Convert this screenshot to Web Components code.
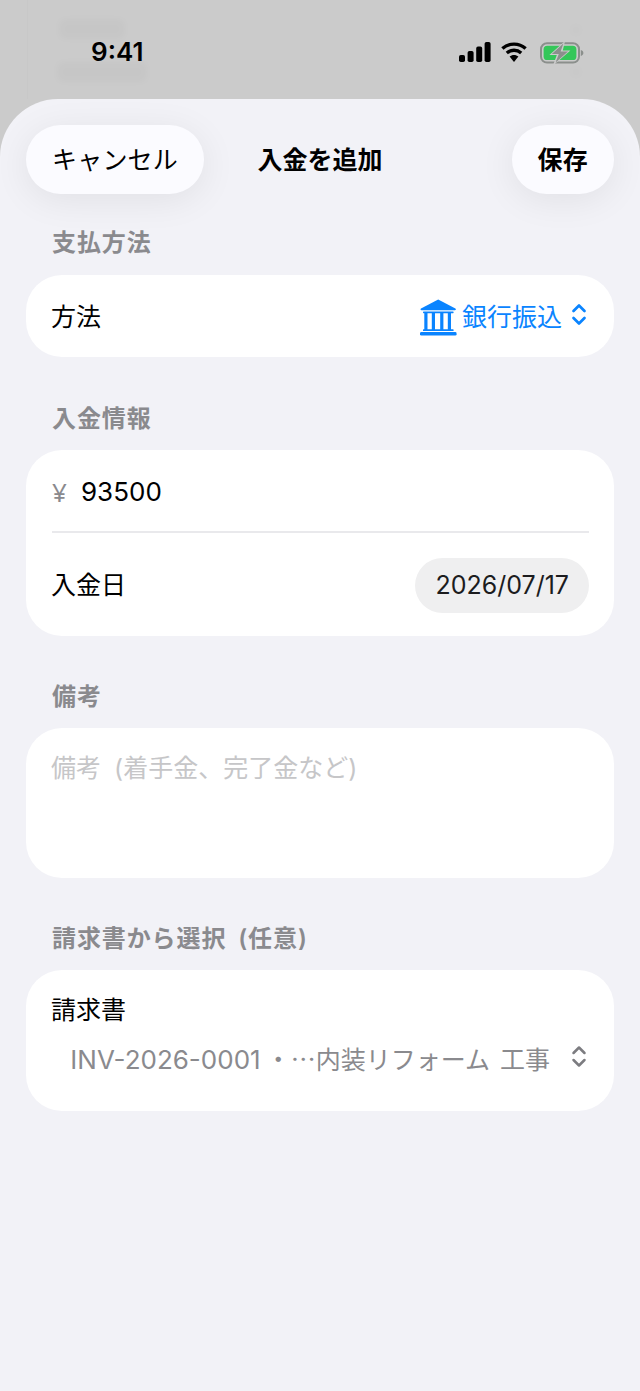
<!DOCTYPE html>
<html lang="ja"><head><meta charset="utf-8"><title>入金を追加</title>
<style>
html,body{margin:0;padding:0;width:640px;height:1391px;overflow:hidden;background:#cbcbcb}
body{font-family:Inter,"Noto Sans CJK JP",sans-serif;}
</style></head><body>
<x-app>
  <x-status-bar slot="status" time="9:41"></x-status-bar>
  <x-sheet slot="sheet">
    <x-nav-bar slot="nav" heading="入金を追加">
      <x-glass-button slot="leading">キャンセル</x-glass-button>
      <x-glass-button slot="trailing" strong>保存</x-glass-button>
    </x-nav-bar>
    <x-section label="支払方法" gap="34" lgap="17">
      <x-row h="82"><span>方法</span><x-method slot="end">銀行振込</x-method></x-row>
    </x-section>
    <x-section label="入金情報" gap="47">
      <x-row h="82" divider><x-amount currency="¥">93500</x-amount></x-row>
      <x-row h="104"><span>入金日</span><x-pill slot="end">2026/07/17</x-pill></x-row>
    </x-section>
    <x-section label="備考" gap="46">
      <x-notes placeholder="備考 (着手金、完了金など)"></x-notes>
    </x-section>
    <x-section label="請求書から選択 (任意)" gap="46">
      <x-picker label="請求書"><span style="font-size:26px">INV-2026-0001</span> <span style="margin-left:-2px">・</span><span style="font-family:'Noto Sans CJK JP',sans-serif">…</span>内装リフォーム <span style="margin-left:3px">工事</span></x-picker>
    </x-section>
  </x-sheet>
</x-app>
<script>
const FONT='Inter,"Noto Sans CJK JP",sans-serif';
function def(name,html){
  customElements.define(name,class extends HTMLElement{
    constructor(){super();this.attachShadow({mode:'open'});}
    connectedCallback(){
      const a=n=>this.getAttribute(n);
      this.shadowRoot.innerHTML=typeof html==='function'?html(a,this):html;
    }
  });
}
const chev=(c,w=2.7)=>`<svg width="16" height="23" viewBox="0 0 16 23" fill="none" stroke="${c}" stroke-width="${w}" stroke-linecap="round" stroke-linejoin="round"><path d="M2.5 8 8 2.5 13.5 8M2.5 15 8 20.5 13.5 15"/></svg>`;

def('x-app',`<style>:host{display:flex;flex-direction:column;width:640px;height:1391px;overflow:hidden;background:#cbcbcb;font-family:${FONT};color:#000}
::slotted(x-sheet){flex:1}</style><slot name="status"></slot><slot name="sheet"></slot>`);

def('x-status-bar',a=>`<style>
:host{display:flex;position:relative;height:99px;box-sizing:border-box;padding:0 56px 0 91px;align-items:flex-start;justify-content:space-between}
.time{font:600 26px/30px Inter,sans-serif;margin-top:37px;position:relative}
.icons{display:flex;align-items:flex-start;margin-top:42px;position:relative}
.ghost{position:absolute;background:#000;opacity:.022;filter:blur(4px);border-radius:4px}
.g1{left:60px;top:20px;width:64px;height:18px}.g2{left:58px;top:63px;width:88px;height:18px}
.g3{left:572px;top:26px;width:8px;height:8px}.g4{left:572px;top:68px;width:8px;height:8px}
.edge{position:absolute;left:27px;top:0;bottom:0;width:1px;background:#000;opacity:.012}
</style>
<i class="ghost g1"></i><i class="ghost g2"></i><i class="ghost g3"></i><i class="ghost g4"></i><i class="edge"></i>
<span class="time">${a('time')}</span>
<span class="icons">
<svg width="32" height="20" viewBox="0 0 32 20" fill="#000"><rect x="0" y="13" width="6" height="7" rx="1.8"/><rect x="8.6" y="9" width="6" height="11" rx="1.8"/><rect x="17.2" y="4.6" width="6" height="15.4" rx="1.8"/><rect x="25.6" y="0" width="6" height="20" rx="1.8"/></svg>
<svg width="26" height="20" viewBox="0 0 26 20" style="margin-left:10px" fill="none" stroke="#000" stroke-width="3.4"><path d="M1.4 6.6C8 .6 18 .6 24.6 6.6"/><path d="M5.8 11C10 7.4 16 7.4 20.2 11"/><path fill="#000" stroke="none" d="M13 20 8.6 14.6C11 12.4 15 12.4 17.4 14.6Z"/></svg>
<svg width="44" height="22" viewBox="0 0 44 22" style="margin-left:13px" fill="none">
<rect x="1" y="1.2" width="38" height="19.4" rx="6" stroke="#8b8f8c" stroke-width="2"/>
<rect x="3.6" y="3.8" width="32.8" height="14.2" rx="3.6" fill="#34c759"/>
<path d="M40.8 8v6c1.6-.4 2.6-1.6 2.6-3s-1-2.6-2.6-3Z" fill="#8b8f8c"/>
<path d="M25 -1 9.4 13h7.4L13 23.5 30.4 8.4h-7.6Z" fill="#cbcbcb"/>
<path d="M23.4 1.4 11.8 12h7L15.6 20.6 28 9.6h-7.4Z" fill="#8b8f8c"/>
</svg>
</span>`);

def('x-sheet',`<style>:host{display:block;position:relative;background:#f2f2f7;border-radius:58px 58px 0 0;overflow:hidden}
.body{position:relative}
</style><div class="body"><slot name="nav"></slot><slot></slot></div>`);

def('x-nav-bar',a=>`<style>:host{display:grid;grid-template-columns:1fr auto 1fr;align-items:center;padding:26px 26px 0;height:69px}
h1{margin:0;font:600 25px/30px ${FONT};white-space:nowrap}
.r{display:flex;justify-content:flex-end}.l{display:flex}
</style><div class="l"><slot name="leading"></slot></div><h1>${a('heading')}</h1><div class="r"><slot name="trailing"></slot></div>`);

def('x-glass-button',(a,e)=>`<style>:host{display:inline-flex;align-items:center;height:69px;padding:0 26px;border-radius:35px;background:#fbfbff;letter-spacing:.2px;
box-shadow:0 6px 36px rgba(0,0,0,.075);font:${e.hasAttribute('strong')?600:400} 25px/30px ${FONT};white-space:nowrap}</style><slot></slot>`);

def('x-section',a=>`<style>:host{display:block;margin-top:${a('gap')}px}
.t{font:600 24px/30px ${FONT};color:#8a8a8e;margin:0 0 ${a('lgap')||16}px 52px;letter-spacing:.9px;word-spacing:5px;white-space:nowrap}
.c{margin:0 26px;background:#fff;border-radius:36px;overflow:hidden;font:400 25px/30px ${FONT}}
</style><div class="t">${a('label')}</div><div class="c"><slot></slot></div>`);

def('x-row',(a,e)=>`<style>:host{display:flex;align-items:center;justify-content:space-between;height:${a('h')}px;padding:2px 25px 0;box-sizing:border-box;position:relative}
.d{position:absolute;left:26px;right:25px;bottom:-1px;height:2px;background:#e9e9ec}
</style><slot></slot><slot name="end"></slot>${e.hasAttribute('divider')?'<i class="d"></i>':''}`);

def('x-method',`<style>:host{display:inline-flex;align-items:center;color:#0a84ff;white-space:nowrap;margin-right:2px}
.i{margin-right:5px;display:block}.s{margin-left:9px;display:block}</style>
<svg class="i" width="37" height="37" viewBox="0 0 37 37" fill="#0a84ff"><path d="M18.2 .4 35.4 9.4c.9.5.5 1.8-.5 1.8H1.5c-1 0-1.4-1.3-.5-1.8Z"/><rect x="3" y="12.6" width="30.6" height="1.6" rx=".6"/><rect x="4.3" y="13.6" width="3.2" height="18"/><rect x="11.8" y="13.6" width="3.2" height="18"/><rect x="20.2" y="13.6" width="3.2" height="18"/><rect x="27.8" y="13.6" width="3.2" height="18"/><rect x="3" y="30.2" width="30.6" height="1.8" rx=".6"/><rect x="0" y="33" width="36.6" height="3.6" rx="1.4"/></svg>
<slot></slot><span class="s">${chev('#0a84ff')}</span>`);

def('x-amount',a=>`<style>:host{display:flex;align-items:center;font-size:26px;margin-left:1px}
.y{color:#8a8a8e;font-size:26px;width:29px;font-family:"Noto Sans",sans-serif}</style><span class="y">${a('currency')}</span><slot></slot>`);

def('x-pill',`<style>:host{display:inline-flex;align-items:center;height:55px;padding:0 20px;border-radius:28px;background:#efeff0;white-space:nowrap;color:#1c1c1e;font-size:25px}</style><slot></slot>`);

def('x-notes',a=>`<style>:host{display:block;height:150px;box-sizing:border-box;padding:25px 25px 0;color:#c6c6c8;white-space:nowrap;word-spacing:6px}</style>${a('placeholder')}`);

def('x-picker',a=>`<style>:host{display:block;height:141px;box-sizing:border-box;padding:25px 27px 0 25px}
.v{display:flex;align-items:center;justify-content:flex-end;margin-top:18px;color:#8a8a8e;white-space:pre}
.s{margin-left:21px;display:block}.t{display:block}</style><div>${a('label')}</div><div class="v"><span class="t"><slot></slot></span><span class="s">${chev('#7c7c80',2.5)}</span></div>`);
</script>
</body></html>
